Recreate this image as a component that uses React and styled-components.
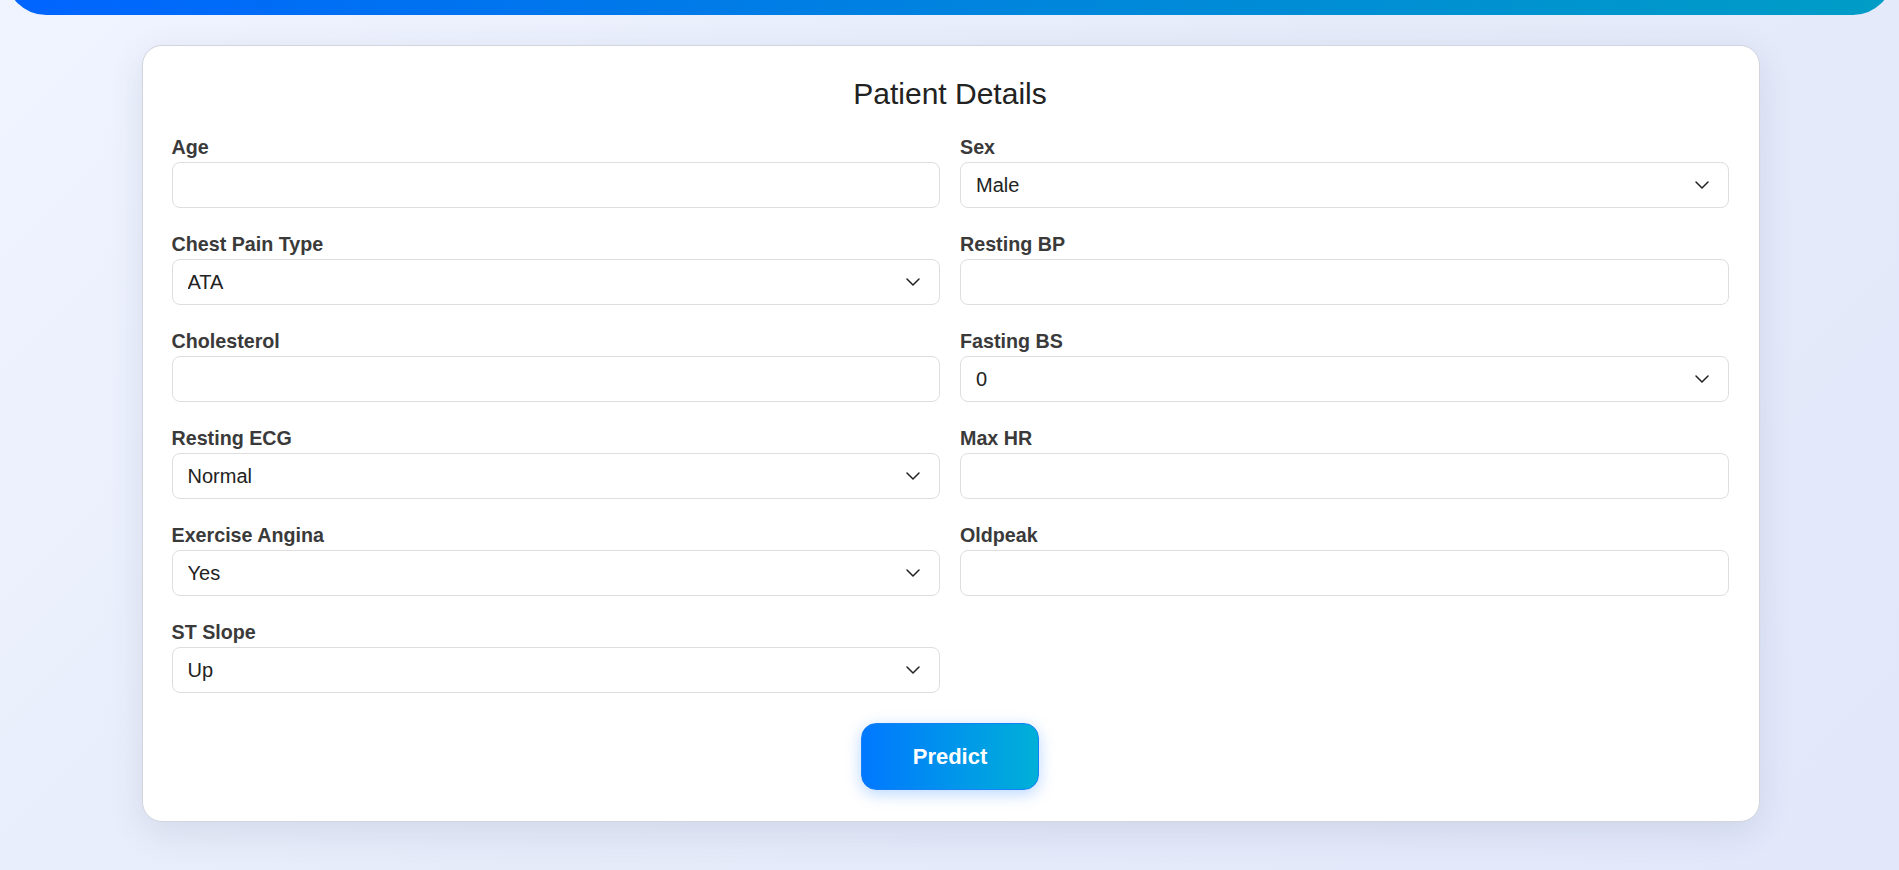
import { useState } from "react";
import styled, { createGlobalStyle } from "styled-components";
import { ChevronDown } from "lucide-react";

const fields = [
    { name: "age", label: "Age" },
    { name: "sex", label: "Sex", options: ["Male", "Female"] },
    { name: "chestPain", label: "Chest Pain Type", options: ["ATA", "NAP", "ASY", "TA"] },
    { name: "restingBP", label: "Resting BP" },
    { name: "cholesterol", label: "Cholesterol" },
    { name: "fastingBS", label: "Fasting BS", options: ["0", "1"] },
    { name: "restingECG", label: "Resting ECG", options: ["Normal", "ST", "LVH"] },
    { name: "maxHR", label: "Max HR" },
    { name: "exerciseAngina", label: "Exercise Angina", options: ["Yes", "No"] },
    { name: "oldpeak", label: "Oldpeak" },
    { name: "stSlope", label: "ST Slope", options: ["Up", "Flat", "Down"] },
];

export default function App() {
    const [values, setValues] = useState(() =>
        Object.fromEntries(fields.map((f) => [f.name, f.options ? f.options[0] : ""]))
    );

    function handleChange(e) {
        setValues({ ...values, [e.target.name]: e.target.value });
    }

    return (
        <>
            <GlobalStyle />
            <Page>
                <Header />
                <Main>
                    <Card onSubmit={(e) => e.preventDefault()}>
                        <Title>Patient Details</Title>
                        <Grid>
                            {fields.map((f) => (
                                <Field key={f.name}>
                                    <Label htmlFor={f.name}>{f.label}</Label>
                                    {f.options ? (
                                        <SelectBox>
                                            <Select
                                                id={f.name}
                                                name={f.name}
                                                value={values[f.name]}
                                                onChange={handleChange}
                                            >
                                                {f.options.map((o) => (
                                                    <option key={o} value={o}>
                                                        {o}
                                                    </option>
                                                ))}
                                            </Select>
                                            <Chevron size={24} strokeWidth={1.5} />
                                        </SelectBox>
                                    ) : (
                                        <Input
                                            id={f.name}
                                            name={f.name}
                                            type="number"
                                            value={values[f.name]}
                                            onChange={handleChange}
                                        />
                                    )}
                                </Field>
                            ))}
                        </Grid>
                        <Actions>
                            <PredictButton type="submit">Predict</PredictButton>
                        </Actions>
                    </Card>
                </Main>
            </Page>
        </>
    );
}

const GlobalStyle = createGlobalStyle`
    * {
        box-sizing: border-box;
    }
    body {
        margin: 0;
        font-family: "Liberation Sans", Arial, sans-serif;
    }
`;
const Page = styled.div`
    min-height: 870px;
    background: linear-gradient(135deg, #f0f4ff 0%, #e6ebfa 50%, #e2e8fa 100%);
    overflow: hidden;
`;
const Header = styled.header`
    height: 80px;
    margin: -65px 6px 0;
    border-radius: 0 0 40px 40px;
    background: linear-gradient(90deg, #0064ff 0%, #0086dc 55%, #009dc6 100%);
`;
const Main = styled.main`
    padding: 30px 0 46px 2px;
`;
const Card = styled.form`
    max-width: 1618px;
    margin: 0 auto;
    padding: 31px 30px 31px 29px;
    background-color: #fff;
    border: 1px solid #d2d5dd;
    border-radius: 20px;
    box-shadow: 0 10px 35px rgba(60, 70, 110, 0.12);
`;
const Title = styled.h2`
    margin: 0 0 25px;
    font-size: 30px;
    font-weight: normal;
    color: #222;
    text-align: center;
`;
const Grid = styled.div`
    display: grid;
    grid-template-columns: 1fr 1fr;
    column-gap: 20px;
    row-gap: 25px;
`;
const Field = styled.div`
    display: flex;
    flex-direction: column;
`;
const Label = styled.label`
    margin-bottom: 3px;
    font-size: 19.7px;
    font-weight: bold;
    color: #3a3a3a;
`;
const Input = styled.input`
    height: 46px;
    padding: 0 15px;
    font-family: inherit;
    font-size: 20px;
    color: #222;
    border: 1px solid #dedede;
    border-radius: 8px;
    outline: none;
    appearance: textfield;
    &::-webkit-inner-spin-button,
    &::-webkit-outer-spin-button {
        -webkit-appearance: none;
        margin: 0;
    }
`;
const SelectBox = styled.div`
    height: 46px;
    display: flex;
    align-items: center;
    padding-right: 14px;
    border: 1px solid #dedede;
    border-radius: 8px;
`;
const Select = styled.select`
    flex: 1;
    height: 100%;
    padding: 0 15px;
    font-family: inherit;
    font-size: 20px;
    color: #222;
    background: transparent;
    border: none;
    outline: none;
    appearance: none;
`;
const Chevron = styled(ChevronDown)`
    color: #222;
    pointer-events: none;
    flex-shrink: 0;
`;
const Actions = styled.div`
    display: flex;
    justify-content: center;
    margin-top: 30px;
`;
const PredictButton = styled.button`
    width: 178px;
    height: 67px;
    font-family: inherit;
    font-size: 22px;
    font-weight: bold;
    color: #fff;
    background: linear-gradient(90deg, #0078ff 0%, #00b0d8 100%);
    border: 1px solid #1680f5;
    border-radius: 15px;
    box-shadow: 0 4px 16px rgba(0, 110, 255, 0.28);
    cursor: pointer;
`;
